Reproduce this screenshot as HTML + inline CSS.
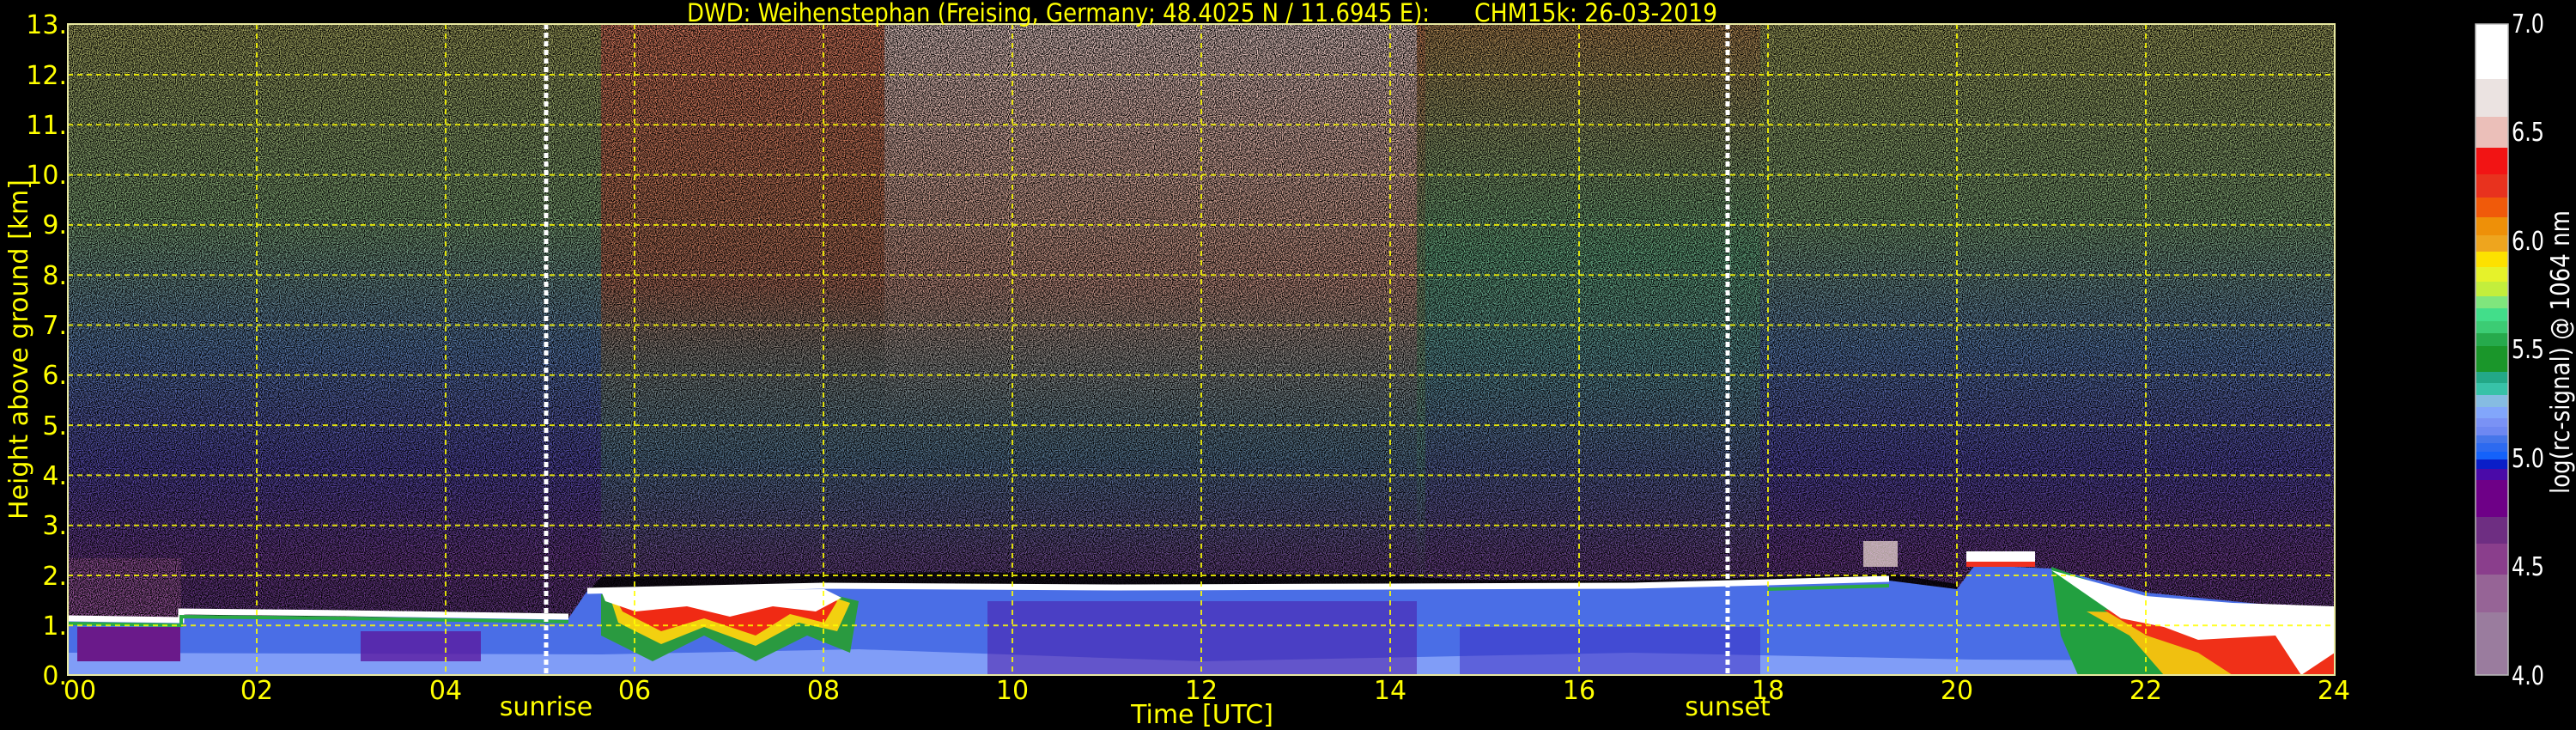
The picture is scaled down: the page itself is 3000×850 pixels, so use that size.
<!DOCTYPE html>
<html><head><meta charset="utf-8"><style>
html,body{margin:0;padding:0;background:#000;}
svg{display:block;}
text{font-family:"DejaVu Sans","Liberation Sans",sans-serif;}
</style></head><body>
<svg width="3000" height="850" viewBox="0 0 3000 850" xmlns="http://www.w3.org/2000/svg">
<defs>
<linearGradient id="bgv" x1="0" y1="28" x2="0" y2="786" gradientUnits="userSpaceOnUse">
<stop offset="0" stop-color="#a8a860"/>
<stop offset="0.3" stop-color="#80a878"/>
<stop offset="0.5" stop-color="#5a7cb0"/>
<stop offset="0.68" stop-color="#5448a8"/>
<stop offset="0.82" stop-color="#6a3a8c"/>
<stop offset="1" stop-color="#583070"/>
</linearGradient>
<linearGradient id="redv" x1="0" y1="28" x2="0" y2="700" gradientUnits="userSpaceOnUse">
<stop offset="0" stop-color="#e07a60" stop-opacity="0.95"/>
<stop offset="0.45" stop-color="#c86a50" stop-opacity="0.8"/>
<stop offset="0.75" stop-color="#60b080" stop-opacity="0.45"/>
<stop offset="1" stop-color="#60b080" stop-opacity="0"/>
</linearGradient>
<linearGradient id="whv" x1="0" y1="28" x2="0" y2="500" gradientUnits="userSpaceOnUse">
<stop offset="0" stop-color="#f0dede" stop-opacity="0.85"/>
<stop offset="1" stop-color="#f0dede" stop-opacity="0"/>
</linearGradient>
<linearGradient id="grv" x1="0" y1="28" x2="0" y2="700" gradientUnits="userSpaceOnUse">
<stop offset="0" stop-color="#c08050" stop-opacity="0.7"/>
<stop offset="0.4" stop-color="#60b080" stop-opacity="0.7"/>
<stop offset="1" stop-color="#60b080" stop-opacity="0"/>
</linearGradient>
<filter id="noise" x="0" y="0" width="100%" height="100%">
<feTurbulence type="fractalNoise" baseFrequency="0.9" numOctaves="1" seed="3"/>
<feColorMatrix type="matrix" values="0 0 0 0 0  0 0 0 0 0  0 0 0 0 0  4 0 0 0 -1.5"/>
</filter>
<clipPath id="pc"><rect x="79" y="28" width="2640" height="758"/></clipPath>
</defs>

<g clip-path="url(#pc)">
<rect x="79" y="28" width="2640" height="758" fill="url(#bgv)"/>
<rect x="700" y="28" width="960" height="700" fill="url(#redv)"/>
<rect x="1030" y="28" width="620" height="520" fill="url(#whv)"/>
<rect x="1650" y="28" width="400" height="700" fill="url(#grv)"/>
<rect x="79" y="650" width="132" height="80" fill="#a05aa0" opacity="0.8"/>
<!-- noise -->
<rect x="79" y="28" width="2640" height="758" filter="url(#noise)"/>
<!-- black gap above BL -->
<path d="M684 690 L700 672 L1100 666 L1619 670 L1700 675 L1900 676 L2059 672 L2200 668 L2279 680 L2279 690 Z" fill="#000" opacity="0.8"/>
<path d="M211 722 L220 712 L662 714 L662 722 Z" fill="#000" opacity="0.7"/>
<!-- boundary layer blue -->
<path d="M79 722 L211 724 L211 716 L400 718 L662 720 L684 688 L959 684 L1300 686 L1619 685 L1900 684 L2059 680 L2200 676 L2279 686 L2300 658 L2389 662 L2499 690 L2600 700 L2719 712 L2719 786 L79 786 Z" fill="#4a6ee6"/>
<path d="M79 760 L700 762 L1000 756 L1400 770 L1900 760 L2300 768 L2719 770 L2719 786 L79 786 Z" fill="#86a2f8" opacity="0.9"/>
<rect x="90" y="730" width="120" height="40" fill="#6a1a8a"/>
<rect x="420" y="735" width="140" height="35" fill="#5a1aa0" opacity="0.8"/>
<rect x="1150" y="700" width="500" height="85" fill="#4a1aa8" opacity="0.55"/>
<rect x="1700" y="730" width="350" height="55" fill="#3a28c0" opacity="0.5"/>
<path d="M700 692 L960 690 L1000 700 L990 760 L940 740 L880 770 L820 740 L760 770 L700 740 Z" fill="#2a9a40"/>
<path d="M710 694 L960 692 L990 702 L975 735 L930 725 L880 752 L820 730 L770 750 L720 725 Z" fill="#f2d010"/>
<path d="M715 694 L955 692 L975 700 L960 725 L920 715 L880 740 L820 720 L770 735 L725 712 Z" fill="#f02a14"/>
<path d="M700 688 L960 686 L980 696 L950 712 L900 706 L850 718 L800 706 L740 712 L705 700 Z" fill="#fff"/>
<path d="M79 720 L211 722 L211 712 L400 714 L662 718 M684 688 L959 682 L1300 684 L1619 683 L1900 682 L2059 678 L2200 674" fill="none" stroke="#fff" stroke-width="7"/>
<path d="M79 726 L211 728 L211 718 L400 720 L662 724 M2059 686 L2200 682" fill="none" stroke="#2aaa44" stroke-width="4"/>
<rect x="2290" y="642" width="80" height="12" fill="#fff"/>
<rect x="2290" y="654" width="80" height="6" fill="#f03020"/>
<rect x="2170" y="630" width="40" height="30" fill="#f4e0d8" opacity="0.7"/>
<path d="M2389 660 L2499 700 L2600 710 L2719 708 L2719 786 L2420 786 L2400 740 Z" fill="#22a040"/>
<path d="M2430 712 L2600 716 L2719 712 L2719 786 L2520 786 L2480 740 Z" fill="#f0c010"/>
<path d="M2450 710 L2600 714 L2719 712 L2719 786 L2600 786 L2560 760 L2500 740 Z" fill="#f03018"/>
<path d="M2389 664 L2499 694 L2600 702 L2719 706 L2719 760 L2680 786 L2650 740 L2560 745 L2520 730 L2470 720 Z" fill="#fff"/>
<g stroke="#ffff00" stroke-width="2" stroke-dasharray="6,5" opacity="0.85">
<line x1="79" y1="728.3" x2="2719" y2="728.3"/><line x1="79" y1="670.0" x2="2719" y2="670.0"/>
<line x1="79" y1="611.7" x2="2719" y2="611.7"/><line x1="79" y1="553.4" x2="2719" y2="553.4"/>
<line x1="79" y1="495.1" x2="2719" y2="495.1"/><line x1="79" y1="436.8" x2="2719" y2="436.8"/>
<line x1="79" y1="378.5" x2="2719" y2="378.5"/><line x1="79" y1="320.2" x2="2719" y2="320.2"/>
<line x1="79" y1="261.9" x2="2719" y2="261.9"/><line x1="79" y1="203.6" x2="2719" y2="203.6"/>
<line x1="79" y1="145.3" x2="2719" y2="145.3"/><line x1="79" y1="87.0" x2="2719" y2="87.0"/>
<line x1="299" y1="28" x2="299" y2="786"/><line x1="519" y1="28" x2="519" y2="786"/>
<line x1="739" y1="28" x2="739" y2="786"/><line x1="959" y1="28" x2="959" y2="786"/>
<line x1="1179" y1="28" x2="1179" y2="786"/><line x1="1399" y1="28" x2="1399" y2="786"/>
<line x1="1619" y1="28" x2="1619" y2="786"/><line x1="1839" y1="28" x2="1839" y2="786"/>
<line x1="2059" y1="28" x2="2059" y2="786"/><line x1="2279" y1="28" x2="2279" y2="786"/>
<line x1="2499" y1="28" x2="2499" y2="786"/>
</g>
<line x1="636" y1="28" x2="636" y2="786" stroke="#fff" stroke-width="5" stroke-dasharray="6,4"/>
<line x1="2012" y1="28" x2="2012" y2="786" stroke="#fff" stroke-width="5" stroke-dasharray="6,4"/>
</g>
<rect x="79" y="28" width="2640" height="758" fill="none" stroke="#e8e8a0" stroke-width="2"/>

<text x="800" y="25" font-size="29" fill="#ffff00" textLength="865" lengthAdjust="spacingAndGlyphs" style="font-family:'DejaVu Sans Condensed','DejaVu Sans',sans-serif">DWD: Weihenstephan (Freising, Germany; 48.4025 N / 11.6945 E):</text>
<text x="1717" y="25" font-size="29" fill="#ffff00" textLength="283" lengthAdjust="spacingAndGlyphs" style="font-family:'DejaVu Sans Condensed','DejaVu Sans',sans-serif">CHM15k: 26-03-2019</text>

<g font-size="30" fill="#ffff00" text-anchor="end">
<text x="78" y="797">0.</text><text x="78" y="739">1.</text><text x="78" y="681">2.</text>
<text x="78" y="622">3.</text><text x="78" y="564">4.</text><text x="78" y="506">5.</text>
<text x="78" y="447">6.</text><text x="78" y="389">7.</text><text x="78" y="331">8.</text>
<text x="78" y="272">9.</text><text x="78" y="214">10.</text><text x="78" y="156">11.</text>
<text x="78" y="98">12.</text><text x="78" y="39">13.</text>
</g>
<text transform="translate(32,407) rotate(-90)" font-size="30" fill="#ffff00" text-anchor="middle">Height above ground [km]</text>

<g font-size="30" fill="#ffff00" text-anchor="middle">
<text x="93" y="814">00</text><text x="299" y="814">02</text><text x="519" y="814">04</text>
<text x="739" y="814">06</text><text x="959" y="814">08</text><text x="1179" y="814">10</text>
<text x="1399" y="814">12</text><text x="1619" y="814">14</text><text x="1839" y="814">16</text>
<text x="2059" y="814">18</text><text x="2279" y="814">20</text><text x="2499" y="814">22</text>
<text x="2718" y="814">24</text>
<text x="636" y="833">sunrise</text>
<text x="2012" y="833">sunset</text>
<text x="1400" y="842">Time [UTC]</text>
</g>

<g>
<rect x="2883" y="28" width="38" height="64" fill="#ffffff"/>
<rect x="2883" y="92" width="38" height="44" fill="#ebe3e1"/>
<rect x="2883" y="136" width="38" height="36" fill="#ebbfb9"/>
<rect x="2883" y="172" width="38" height="31" fill="#f21414"/>
<rect x="2883" y="203" width="38" height="27" fill="#e8321e"/>
<rect x="2883" y="230" width="38" height="23" fill="#f05a0a"/>
<rect x="2883" y="253" width="38" height="21" fill="#ee9008"/>
<rect x="2883" y="274" width="38" height="19" fill="#eea51e"/>
<rect x="2883" y="293" width="38" height="18" fill="#fde100"/>
<rect x="2883" y="311" width="38" height="17" fill="#e6f22a"/>
<rect x="2883" y="328" width="38" height="17" fill="#c3ee3c"/>
<rect x="2883" y="345" width="38" height="14" fill="#7fe67d"/>
<rect x="2883" y="359" width="38" height="15" fill="#42de8a"/>
<rect x="2883" y="374" width="38" height="14" fill="#3ccc74"/>
<rect x="2883" y="388" width="38" height="15" fill="#26aa4c"/>
<rect x="2883" y="403" width="38" height="30" fill="#1a962a"/>
<rect x="2883" y="433" width="38" height="13" fill="#23a887"/>
<rect x="2883" y="446" width="38" height="14" fill="#38c2a8"/>
<rect x="2883" y="460" width="38" height="14" fill="#86bce2"/>
<rect x="2883" y="474" width="38" height="13" fill="#82a6fb"/>
<rect x="2883" y="487" width="38" height="10" fill="#7a92f5"/>
<rect x="2883" y="497" width="38" height="10" fill="#6e88f2"/>
<rect x="2883" y="507" width="38" height="9" fill="#4676ea"/>
<rect x="2883" y="516" width="38" height="10" fill="#2d6af0"/>
<rect x="2883" y="526" width="38" height="9" fill="#1462fa"/>
<rect x="2883" y="535" width="38" height="11" fill="#0a1ec8"/>
<rect x="2883" y="546" width="38" height="13" fill="#4a0aa8"/>
<rect x="2883" y="559" width="38" height="43" fill="#6e0087"/>
<rect x="2883" y="602" width="38" height="31" fill="#6e2e82"/>
<rect x="2883" y="633" width="38" height="36" fill="#8a3e8c"/>
<rect x="2883" y="669" width="38" height="44" fill="#966496"/>
<rect x="2883" y="713" width="38" height="73" fill="#9a7c9e"/>
<rect x="2883" y="28" width="38" height="758" fill="none" stroke="#bbb" stroke-width="1.5"/>
</g>
<g font-size="30" fill="#ffffff">
<text x="2925" y="797" textLength="38" lengthAdjust="spacingAndGlyphs">4.0</text>
<text x="2925" y="670" textLength="38" lengthAdjust="spacingAndGlyphs">4.5</text>
<text x="2925" y="544" textLength="38" lengthAdjust="spacingAndGlyphs">5.0</text>
<text x="2925" y="417" textLength="38" lengthAdjust="spacingAndGlyphs">5.5</text>
<text x="2925" y="291" textLength="38" lengthAdjust="spacingAndGlyphs">6.0</text>
<text x="2925" y="164" textLength="38" lengthAdjust="spacingAndGlyphs">6.5</text>
<text x="2925" y="38" textLength="38" lengthAdjust="spacingAndGlyphs">7.0</text>
</g>
<text transform="translate(2992,410) rotate(-90)" font-size="30" fill="#ffffff" text-anchor="middle" textLength="330" lengthAdjust="spacingAndGlyphs">log(rc-signal) @ 1064 nm</text>
</svg>
</body></html>
